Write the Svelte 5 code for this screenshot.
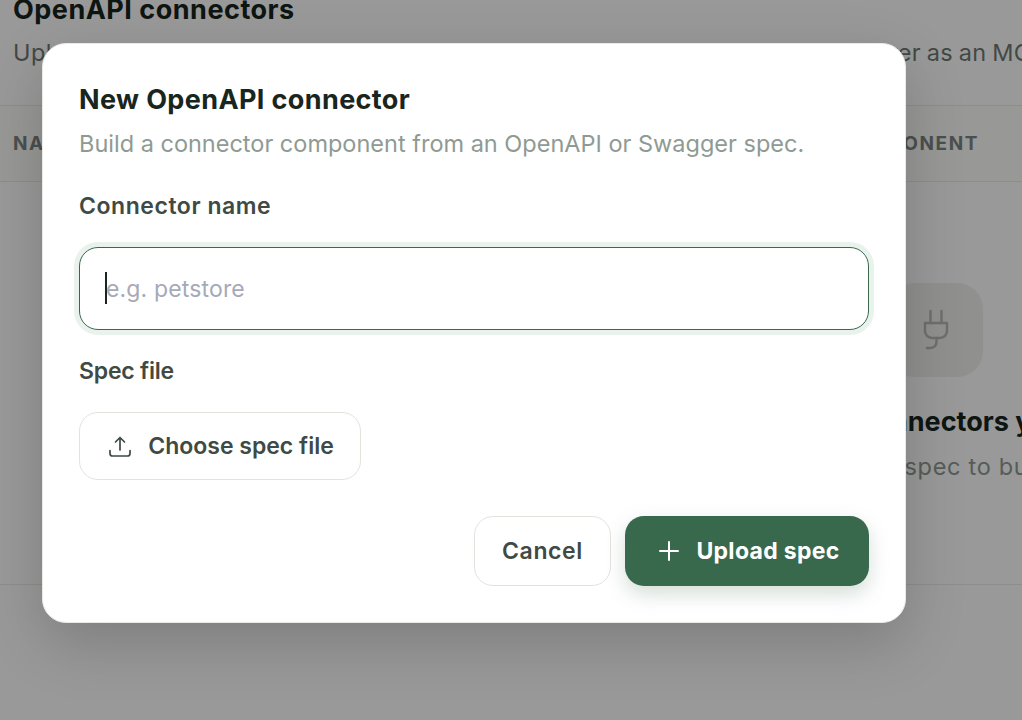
<script>
	let name = $state('');
</script>

<div class="page">
	<header class="head">
		<h1>OpenAPI connectors</h1>
		<p>Upload an OpenAPI or Swagger spec to build a connector, serve it to your server as an MCP tool</p>
	</header>

	<section class="table">
		<div class="cols">
			<span>NAME</span>
			<span class="right">COMPONENT</span>
		</div>
		<div class="empty">
			<div class="tile">
				<svg width="32" height="48" viewBox="0 0 32 48" fill="none" stroke="currentColor" stroke-width="2.4" stroke-linecap="round" stroke-linejoin="round">
					<path d="M10.5 5v12M21.5 5v12" />
					<path d="M5 17h22v8a7 7 0 0 1-7 7h-8a7 7 0 0 1-7-7z" />
					<path d="M16.5 32v4a6 6 0 0 1-6 6H7" />
				</svg>
			</div>
			<h2>No connectors yet</h2>
			<p>Upload an OpenAPI spec to build its first one.</p>
		</div>
	</section>

	<div class="scrim">
		<div class="modal">
			<h3>New OpenAPI connector</h3>
			<p class="sub">Build a connector component from an OpenAPI or Swagger spec.</p>

			<label class="label" for="conn-name">Connector name</label>
			<div class="field">
				<input id="conn-name" bind:value={name} placeholder="e.g. petstore" />
				<span class="caret"></span>
			</div>

			<div class="label second">Spec file</div>
			<button class="btn file">
				<svg width="24" height="24" viewBox="0 0 24 24" fill="none" stroke="currentColor" stroke-width="1.7" stroke-linecap="round" stroke-linejoin="round">
					<path d="M12 16V3.5M7.5 8 12 3.5 16.5 8" />
					<path d="M2 16.5v3a2.5 2.5 0 0 0 2.5 2.5h15a2.5 2.5 0 0 0 2.5-2.5v-3" />
				</svg>
				<span>Choose spec file</span>
			</button>

			<div class="actions">
				<button class="btn cancel">Cancel</button>
				<button class="btn primary">
					<svg width="24" height="24" viewBox="0 0 24 24" fill="none" stroke="currentColor" stroke-width="2" stroke-linecap="round">
						<path d="M12 3v18M3 12h18" />
					</svg>
					<span>Upload spec</span>
				</button>
			</div>
		</div>
	</div>
</div>

<style>
	:global(body) {
		margin: 0;
		background: #f4f4f1;
	}
	.page {
		position: relative;
		width: 1022px;
		height: 720px;
		overflow: hidden;
		background: #fff;
		font-family: Inter, 'Noto Sans', sans-serif;
	}
	.head {
		box-sizing: border-box;
		height: 114px;
		margin-top: -8px;
		padding: 0 13px;
		border-bottom: 1px solid #ececea;
	}
	.head h1 {
		margin: 0;
		font-size: 27px;
		line-height: 36px;
		font-weight: 700;
		color: #18261e;
		letter-spacing: 0.5px;
	}
	.head p {
		margin: 9px 0 0;
		font-size: 23.5px;
		line-height: 32px;
		color: #6f7a73;
		white-space: nowrap;
		letter-spacing: 0.4px;
		word-spacing: -1.4px;
	}
	.table {
		height: 478px;
		border-bottom: 1px solid #ececea;
	}
	.cols {
		display: flex;
		justify-content: space-between;
		align-items: center;
		height: 76px;
		box-sizing: border-box;
		padding: 0 43px 0 13px;
		border-bottom: 1px solid #ececea;
		font-size: 19px;
		font-weight: 700;
		letter-spacing: 1.6px;
		color: #7c8580;
		background: #fdfdfc;
	}
	.empty {
		width: 1872px;
		padding-top: 101px;
		display: flex;
		flex-direction: column;
		align-items: center;
	}
	.tile {
		width: 94px;
		height: 94px;
		border-radius: 26px;
		background: #f0f0ee;
		color: #b4b9b6;
		display: flex;
		align-items: center;
		justify-content: center;
	}
	.empty h2 {
		margin: 27px 0 0;
		font-size: 27px;
		line-height: 36px;
		font-weight: 700;
		color: #18261e;
		white-space: nowrap;
	}
	.empty p {
		margin: 9px 0 0;
		font-size: 23.5px;
		line-height: 36px;
		color: #8f9a93;
		white-space: nowrap;
		letter-spacing: 0.7px;
	}
	.scrim {
		position: absolute;
		inset: 0;
		background: rgba(0, 0, 0, 0.4);
	}
	.modal {
		position: absolute;
		left: 42px;
		top: 43px;
		width: 864px;
		height: 580px;
		box-sizing: border-box;
		padding: 36px;
		background: #fff;
		border: 1px solid #e9e9e6;
		border-radius: 24px;
		box-shadow: 0 20px 60px rgba(0, 0, 0, 0.18);
	}
	h3 {
		margin: 0;
		font-size: 27px;
		line-height: 40px;
		font-weight: 700;
		color: #18261e;
		letter-spacing: 0.38px;
	}
	.sub {
		margin: 6px 0 0;
		font-size: 23.5px;
		line-height: 36px;
		color: #8f9a93;
		white-space: nowrap;
	}
	.label {
		display: block;
		margin-top: 27px;
		font-size: 23px;
		line-height: 34px;
		font-weight: 600;
		color: #3f4a44;
		letter-spacing: 0.55px;
	}
	.label.second {
		margin-top: 24px;
		letter-spacing: -0.2px;
	}
	.field {
		position: relative;
		margin-top: 24px;
	}
	input {
		display: block;
		width: 100%;
		height: 83px;
		box-sizing: border-box;
		padding: 0 26px;
		border: 1px solid #39694d;
		border-radius: 19px;
		outline: none;
		background: #fff;
		box-shadow: 0 0 0 5px #e9f2ed;
		font: inherit;
		font-size: 23px;
		letter-spacing: 0.15px;
		color: #18261e;
	}
	input::placeholder {
		color: #a6a9b8;
		opacity: 1;
	}
	.caret {
		position: absolute;
		left: 26px;
		top: 25px;
		width: 2px;
		height: 32px;
		background: #18261e;
	}
	.btn {
		display: inline-flex;
		align-items: center;
		justify-content: center;
		box-sizing: border-box;
		font-family: inherit;
		font-size: 23px;
		font-weight: 600;
		color: #3f4a44;
		background: #fff;
		border: 1px solid #e3e3de;
		border-radius: 19px;
	}
	.file {
		width: 282px;
		height: 68px;
		margin-top: 24px;
		padding: 0 0 0 2px;
		gap: 16px;
	}
	.actions {
		display: flex;
		justify-content: flex-end;
		gap: 14px;
		margin-top: 36px;
	}
	.cancel {
		width: 137px;
		height: 70px;
		letter-spacing: 0.6px;
	}
	.primary {
		width: 244px;
		height: 70px;
		padding: 0 0 0 3px;
		gap: 15px;
		color: #fff;
		font-weight: 700;
		letter-spacing: 0.3px;
		background: #39694d;
		border: none;
		box-shadow: 0 8px 20px rgba(57, 105, 77, 0.22);
	}
</style>
